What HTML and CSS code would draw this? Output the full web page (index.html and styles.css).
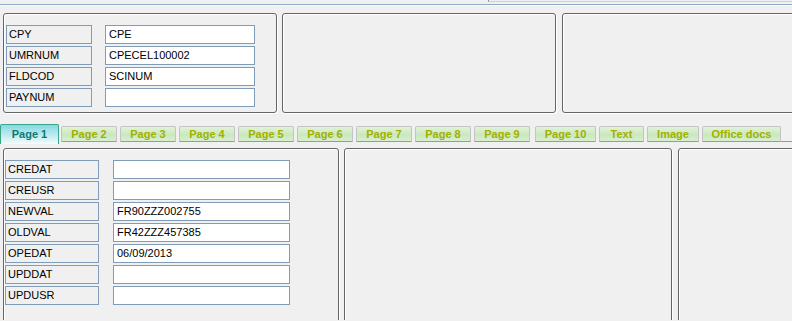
FILE: index.html
```html
<!DOCTYPE html>
<html lang="en">
<head>
  <meta charset="UTF-8">
  <title>Record</title>
  <link rel="stylesheet" href="styles.css">
</head>
<body>
  <div class="topbar"><div class="topfield"></div></div>
  <div class="rule"></div>

  <div class="groups top">
    <div class="group g1">
      <div class="row"><span class="lbl">CPY</span><span class="fld">CPE</span></div>
      <div class="row"><span class="lbl">UMRNUM</span><span class="fld">CPECEL100002</span></div>
      <div class="row"><span class="lbl">FLDCOD</span><span class="fld">SCINUM</span></div>
      <div class="row"><span class="lbl">PAYNUM</span><span class="fld"></span></div>
    </div>
    <div class="group g2"></div>
    <div class="group g3"></div>
  </div>

  <div class="tabs">
    <span class="tab active">Page 1</span>
    <span class="tab">Page 2</span>
    <span class="tab">Page 3</span>
    <span class="tab">Page 4</span>
    <span class="tab">Page 5</span>
    <span class="tab">Page 6</span>
    <span class="tab">Page 7</span>
    <span class="tab">Page 8</span>
    <span class="tab">Page 9</span>
    <span class="tab w10">Page 10</span>
    <span class="tab wt">Text</span>
    <span class="tab wi">Image</span>
    <span class="tab wo">Office docs</span>
    <span class="tab-fill"></span>
  </div>

  <div class="groups bottom">
    <div class="group b1">
      <div class="row"><span class="lbl">CREDAT</span><span class="fld"></span></div>
      <div class="row"><span class="lbl">CREUSR</span><span class="fld"></span></div>
      <div class="row"><span class="lbl">NEWVAL</span><span class="fld">FR90ZZZ002755</span></div>
      <div class="row"><span class="lbl">OLDVAL</span><span class="fld">FR42ZZZ457385</span></div>
      <div class="row"><span class="lbl">OPEDAT</span><span class="fld">06/09/2013</span></div>
      <div class="row"><span class="lbl">UPDDAT</span><span class="fld"></span></div>
      <div class="row"><span class="lbl">UPDUSR</span><span class="fld"></span></div>
    </div>
    <div class="group b2"></div>
    <div class="group b3"></div>
  </div>
</body>
</html>
```
FILE: styles.css
```css
html { overflow: hidden; }
body { margin: 0; background: #f0f0f0; font-family: "Liberation Sans", Arial, sans-serif; font-size: 11px; color: #000; overflow: hidden; width: 792px; height: 321px; }

.topbar { height: 4px; }
.topfield { margin-left: 488px; height: 1px; border-left: 1px solid #8a8a8a; border-bottom: 1px solid #d0d0d0; }
.rule { height: 1px; background: #8eaccb; border-bottom: 1px solid #fbfbfb; }

.groups { display: flex; white-space: nowrap; overflow: hidden; }
.group { flex: none; box-sizing: border-box; border: 1px solid #656565; border-radius: 3px; box-shadow: 1px 1px 0 #fff, inset 1px 1px 0 #fff; }

.top { margin-top: 7px; padding-left: 3px; gap: 5px; height: 101px; }
.top .group { height: 100px; width: 274px; padding: 11px 0 0 2px; }
.top .g3 { width: 300px; margin-left: 1px; }
.top .lbl { width: 86px; }
.top .fld { width: 150px; margin-left: 13px; }

.row { display: flex; height: 19px; margin-bottom: 2px; }
.lbl, .fld { box-sizing: border-box; height: 19px; line-height: 17px; border: 1px solid #7f9db9; padding-left: 2px; }
.fld { background: #fff; padding-left: 3px; }

.tabs { display: flex; margin-top: 8px; height: 20px; align-items: flex-end; box-sizing: border-box; }
.tab { box-sizing: border-box; width: 56px; height: 16px; margin-left: 3px; border: 1px solid #c4c4c4; border-bottom: 1px solid #9a9a9a; border-radius: 2px 2px 0 0; background: linear-gradient(#e3f2d9, #c9e8bd 55%, #d8efcf); color: #a2b000; font-weight: bold; text-align: center; line-height: 14px; font-size: 11px; }
.tab.active { width: 59px; height: 20px; margin-left: 0; margin-bottom: -2px; border: 1px solid #3ba58a; border-bottom: none; background: linear-gradient(#86d9e6, #c6ecf0 60%, #f5fbfb); color: #0c7a6c; line-height: 19px; position: relative; }
.tab.active + .tab { margin-left: 2px; }
.tab.w10 { width: 61px; margin-left: 5px; }
.tab.wt { width: 45px; }
.tab.wi { width: 52px; }
.tab.wo { width: 79px; }
.tab-fill { flex: 1; height: 0; border-bottom: 1px solid #9a9a9a; }

.bottom { margin-top: 6px; padding-left: 3px; gap: 5px; height: 172px; }
.bottom .group { height: 200px; padding: 11px 0 0 1px; }
.bottom .b1 { width: 336px; }
.bottom .b2 { width: 328px; margin-left: 0; }
.bottom .b3 { width: 200px; margin-left: 1px; }
.bottom .lbl { width: 94px; }
.bottom .fld { width: 177px; margin-left: 14px; }
```
